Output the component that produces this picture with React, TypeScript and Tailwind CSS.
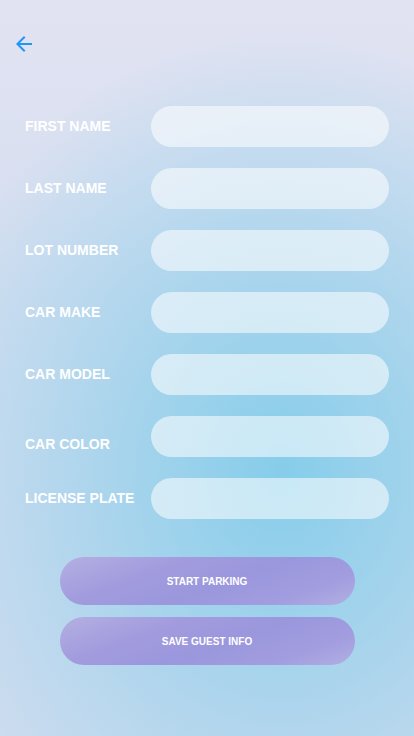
import { MdArrowBack } from "react-icons/md"

const fields = ["FIRST NAME", "LAST NAME", "LOT NUMBER", "CAR MAKE", "CAR MODEL", "CAR COLOR", "LICENSE PLATE"]

function FieldRow({ label }: { label: string }) {
  const shifted = label === "CAR COLOR"
  return (
    <div className="flex h-[41px] items-center">
      <label
        className={`w-[126px] shrink-0 text-[14px] font-bold text-white ${shifted ? "mt-[16px]" : ""}`}
      >
        {label}
      </label>
      <input
        type="text"
        className="h-[41px] flex-1 rounded-full bg-white/55 px-4 text-[14px] text-gray-700 outline-none"
      />
    </div>
  )
}

function ActionButton({ text }: { text: string }) {
  return (
    <button className="flex h-[48px] w-[295px] items-center justify-center rounded-full bg-[linear-gradient(160deg,#b4b0e1_0%,#a29cde_30%,#9b97dd_55%,#a29ddf_80%,#b2afe2_100%)] text-[10px] font-bold text-white">
      {text}
    </button>
  )
}

export default function App() {
  return (
    <div
      className="flex h-[736px] w-[414px] flex-col bg-[radial-gradient(ellipse_90%_60%_at_68%_64%,rgba(134,205,234,1)_0%,rgba(134,205,234,0.55)_45%,rgba(134,205,234,0)_100%),linear-gradient(to_bottom,#e2e3f2_0%,#d4def0_40%,#cfdcef_100%)] font-['Liberation_Sans',Arial,sans-serif]"
    >
      <div className="px-[12px] pt-[32px]">
        <button className="block text-[#2196f3]">
          <MdArrowBack size={24} />
        </button>
      </div>

      <div className="mt-[50px] flex flex-col gap-[21px] px-[25px]">
        {fields.map((f) => (
          <FieldRow key={f} label={f} />
        ))}
      </div>

      <div className="mt-[38px] flex flex-col items-center gap-[12px]">
        <ActionButton text="START PARKING" />
        <ActionButton text="SAVE GUEST INFO" />
      </div>
    </div>
  )
}
